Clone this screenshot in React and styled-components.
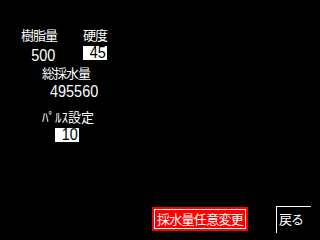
import React from "react";
import styled, { createGlobalStyle } from "styled-components";

const GlobalStyle = createGlobalStyle`
  html, body {
    margin: 0;
    padding: 0;
    background: #000;
  }
`;

const Screen = styled.div`
  width: 320px;
  height: 240px;
  background: #000;
  color: #fff;
  display: flex;
  flex-direction: column;
  overflow: hidden;
  font-family: "Noto Sans CJK JP", "Noto Sans", sans-serif;
`;

const Row = styled.div`
  display: flex;
  align-items: flex-start;
  padding-left: ${(p) => p.$left}px;
  margin-top: ${(p) => p.$top}px;
`;

const Field = styled.div`
  display: flex;
  flex-direction: column;
  align-items: ${(p) => (p.$align === "start" ? "flex-start" : "flex-end")};
  margin-left: ${(p) => p.$gap || 0}px;
`;

const Label = styled.div`
  font-size: 13px;
  line-height: 14px;
  height: 14px;
  letter-spacing: ${(p) => (p.$loose ? "0" : "-1px")};
  white-space: nowrap;
`;

// tall narrow digits like the panel's bitmap font
const Digits = styled.span`
  display: inline-block;
  font-family: "Liberation Sans", Arial, sans-serif;
  font-size: 17px;
  line-height: 14px;
  transform: scaleX(0.85);
  transform-origin: ${(p) => (p.$from === "left" ? "left" : "right")} center;
`;

const Value = styled.div`
  height: 14px;
  margin-top: ${(p) => p.$top || 0}px;
  margin-left: ${(p) => p.$indent || 0}px;
  margin-right: ${(p) => p.$trail || 0}px;
  padding-top: 1px;
  line-height: 14px;
`;

const InputBox = styled.div`
  width: 24px;
  height: 14px;
  background: #fff;
  color: #000;
  display: flex;
  justify-content: flex-end;
  align-items: flex-start;
  padding-right: 1px;
  box-sizing: border-box;
  line-height: 13px;
  margin-top: ${(p) => p.$top || 0}px;
  margin-left: ${(p) => p.$indent || 0}px;
`;

const Footer = styled.div`
  margin-top: auto;
  display: flex;
  align-items: flex-end;
  padding: 0 0 7px 152px;
  gap: 28px;
`;

const RedButton = styled.div`
  width: 96px;
  height: 24px;
  margin-bottom: 2px;
  background: #ff0000;
  outline: 1px solid #fff;
  outline-offset: -3px;
  display: flex;
  align-items: center;
  justify-content: center;
  font-size: 13px;
  letter-spacing: -0.7px;
  line-height: 14px;
  white-space: nowrap;
`;

const BackButton = styled.div`
  width: 35px;
  height: 27px;
  box-sizing: border-box;
  border-left: 1px solid #fff;
  border-top: 1px solid #fff;
  padding: 5px 0 0 2px;
  font-size: 13px;
  letter-spacing: -1px;
  line-height: 14px;
`;

export default function App() {
  return (
    <>
      <GlobalStyle />
      <Screen>
        <Row $left={21} $top={28}>
          <Field>
            <Label>樹脂量</Label>
            <Value $top={4} $trail={2}>
              <Digits>500</Digits>
            </Value>
          </Field>
          <Field $gap={26}>
            <Label>硬度</Label>
            <InputBox $top={4}>
              <Digits>45</Digits>
            </InputBox>
          </Field>
        </Row>
        <Row $left={42} $top={5}>
          <Field $align="start">
            <Label>総採水量</Label>
            <Value $top={2} $indent={8}>
              <Digits $from="left">495560</Digits>
            </Value>
          </Field>
        </Row>
        <Row $left={42} $top={13}>
          <Field $align="start">
            <Label $loose>ﾊﾟﾙｽ設定</Label>
            <InputBox $top={4} $indent={13}>
              <Digits>10</Digits>
            </InputBox>
          </Field>
        </Row>
        <Footer>
          <RedButton>採水量任意変更</RedButton>
          <BackButton>戻る</BackButton>
        </Footer>
      </Screen>
    </>
  );
}
